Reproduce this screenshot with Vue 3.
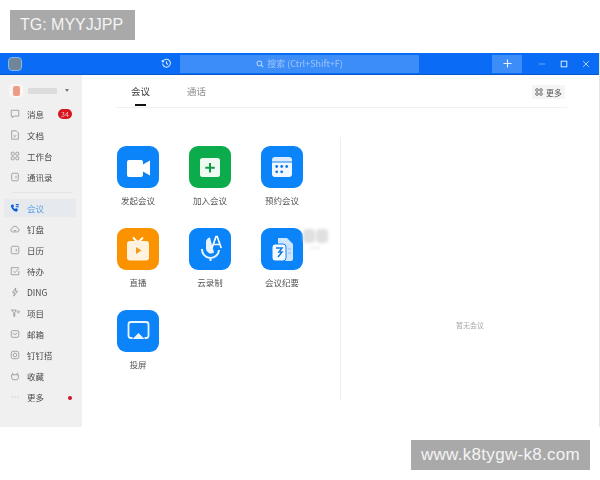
<script setup>
const navTop = [
  { label: "消息", icon: "chat", badge: "34" },
  { label: "文档", icon: "doc" },
  { label: "工作台", icon: "apps" },
  { label: "通讯录", icon: "book" },
];

const navBottom = [
  { label: "会议", icon: "phone", active: true },
  { label: "钉盘", icon: "cloud" },
  { label: "日历", icon: "cal" },
  { label: "待办", icon: "todo" },
  { label: "DING", icon: "bolt" },
  { label: "项目", icon: "proj" },
  { label: "邮箱", icon: "mail" },
  { label: "钉钉搭", icon: "ring" },
  { label: "收藏", icon: "box" },
  { label: "更多", icon: "dots", dot: true },
];

const tiles = [
  { label: "发起会议", icon: "video", color: "#0a84f8" },
  { label: "加入会议", icon: "plus", color: "#0cab4c" },
  { label: "预约会议", icon: "calendar", color: "#0a84f8" },
  { label: "直播", icon: "tv", color: "#fb9300" },
  { label: "云录制", icon: "mic", color: "#0a84f8" },
  { label: "会议纪要", icon: "notes", color: "#0a84f8" },
  { label: "投屏", icon: "cast", color: "#0a84f8" },
];
</script>

<template>
  <div class="page">
    <div class="tag tag-top">TG: MYYJJPP</div>

    <div class="window">
      <header class="titlebar">
        <div class="logo"></div>
        <svg class="history" viewBox="0 0 14 14" fill="none" stroke="#dcecff" stroke-width="1.3">
          <path d="M2.6 4.2A5 5 0 1 1 2 7" />
          <path d="M1.6 2.4v2.2h2.2" />
          <path d="M7 4.2V7l2 1.2" />
        </svg>
        <div class="search">
          <svg class="search-icon" viewBox="0 0 10 10" fill="none" stroke="#b5d4ff" stroke-width="1.3">
            <circle cx="4.2" cy="4.2" r="3" />
            <path d="M6.5 6.5 9 9" />
          </svg>
          <span>搜索 (Ctrl+Shift+F)</span>
        </div>
        <div class="add">
          <svg viewBox="0 0 10 10" stroke="#e8f2ff" stroke-width="1.2"><path d="M5 0.5v9M0.5 5h9" /></svg>
        </div>
        <div class="controls">
          <svg viewBox="0 0 10 10" stroke="#7fb4fb" stroke-width="1" fill="none"><path d="M1 5h8" /></svg>
          <svg viewBox="0 0 10 10" stroke="#d5e7ff" stroke-width="1.3" fill="none"><rect x="1.5" y="1.5" width="7" height="7" /></svg>
          <svg viewBox="0 0 10 10" stroke="#c3dcff" stroke-width="1.1" fill="none"><path d="M1.5 1.5l7 7M8.5 1.5l-7 7" /></svg>
        </div>
      </header>

      <div class="body">
        <aside class="sidebar">
          <div class="profile">
            <div class="avatar"><span></span></div>
            <div class="name"></div>
            <div class="caret"></div>
          </div>

          <div v-for="item in navTop" :key="item.label" class="nav-item">
            <svg class="nav-icon" viewBox="0 0 12 12" fill="none" stroke="#8b8b8b" stroke-width="0.9">
              <path v-if="item.icon === 'chat'" d="M1.5 1.5h9v7H4.5L2.8 10.4V8.5H1.5z" />
              <path v-if="item.icon === 'doc'" d="M2 1h5.5L10 3.5V11H2zM4 6l2 2M7.5 6 5 9" />
              <g v-if="item.icon === 'apps'">
                <rect x="1.5" y="1.5" width="3.6" height="3.6" rx="1" />
                <rect x="6.9" y="1.5" width="3.6" height="3.6" rx="1" />
                <rect x="1.5" y="6.9" width="3.6" height="3.6" rx="1" />
                <rect x="6.9" y="6.9" width="3.6" height="3.6" rx="1" />
              </g>
              <g v-if="item.icon === 'book'">
                <rect x="2" y="1.5" width="8" height="9" rx="1.5" />
                <path d="M7.2 4.5v3" />
              </g>
            </svg>
            <span class="nav-label">{{ item.label }}</span>
            <span v-if="item.badge" class="badge">{{ item.badge }}</span>
          </div>

          <div class="nav-divider"></div>

          <div
            v-for="item in navBottom"
            :key="item.label"
            class="nav-item"
            :class="{ active: item.active }"
          >
            <svg class="nav-icon" viewBox="0 0 12 12" fill="none" stroke="#8b8b8b" stroke-width="0.9">
              <g v-if="item.icon === 'phone'">
                <path
                  fill="#0a5fd8"
                  stroke="none"
                  d="M1 2.800 3.600 1.400l1.300 2.400-1.100 1c.5 1.200 1.200 1.900 2.400 2.400l1-1.100 2.400 1.300L8.300 10.600C4.600 10.400 1.400 7 1 2.800z"
                />
                <path d="M7 2h3.500M7 4.500h3.500" stroke="#0a5fd8" stroke-width="1.400" />
              </g>
              <path v-if="item.icon === 'cloud'" d="M3 9.500a2.200 2.200 0 0 1-.3-4.300 3.400 3.400 0 0 1 6.600 0A2.200 2.200 0 0 1 9 9.500zM4.500 7.800h3" />
              <g v-if="item.icon === 'cal'">
                <rect x="1.500" y="1.500" width="9" height="9" rx="1.500" />
                <path d="M7.500 4.500v3.500" />
              </g>
              <path v-if="item.icon === 'todo'" d="M10.500 2H1.500v8.500h9V6M4 6l2 2 4.500-5" />
              <path v-if="item.icon === 'bolt'" d="M7 1 3 6.500h2.500L4.500 11 9 5H6.500z" />
              <path v-if="item.icon === 'proj'" d="M1.500 2.500h6L5.800 5.500V10H4.500V5.500zM10 3.500a1.200 1.200 0 1 1-.1 0" />
              <g v-if="item.icon === 'mail'">
                <rect x="1.500" y="2" width="9" height="8" rx="1.500" />
                <path d="M3.500 5 6 6.800 8.500 5" />
              </g>
              <g v-if="item.icon === 'ring'">
                <rect x="1.500" y="1.500" width="9" height="9" rx="2.500" />
                <circle cx="6" cy="6" r="2.200" />
              </g>
              <path v-if="item.icon === 'box'" d="M2 4.500h8V8a2.500 2.500 0 0 1-2.500 2.500h-3A2.500 2.500 0 0 1 2 8zM4 4.500 3 2M8 4.500 9 2" />
              <path v-if="item.icon === 'dots'" d="M2 6h.9M5.600 6h.9M9.200 6h.9" />
            </svg>
            <span class="nav-label">{{ item.label }}</span>
            <span v-if="item.dot" class="dot"></span>
          </div>
        </aside>

        <main class="content">
          <div class="tabs">
            <div class="tab tab-active">会议</div>
            <div class="tab">通话</div>
            <div class="more-btn">
              <svg viewBox="0 0 10 10" fill="none" stroke="#555" stroke-width="1.100">
                <rect x="1" y="1" width="3" height="3" rx="0.800" />
                <rect x="6" y="1" width="3" height="3" rx="0.800" />
                <rect x="1" y="6" width="3" height="3" rx="0.800" />
                <rect x="6" y="6" width="3" height="3" rx="0.800" />
              </svg>
              <span>更多</span>
            </div>
          </div>

          <div class="panels">
            <div class="tile-grid">
              <div v-for="tile in tiles" :key="tile.label" class="tile">
                <div class="tile-box" :style="{ background: tile.color }">
                  <svg class="tile-icon" viewBox="0 0 42 42">
                    <path
                      v-if="tile.icon === 'video'"
                      fill="#fff"
                      d="M10 16a2 2 0 0 1 2-2h12a2 2 0 0 1 2 2v2.500l7-4v15l-7-4V29a2 2 0 0 1-2 2H12a2 2 0 0 1-2-2z"
                    />
                    <g v-if="tile.icon === 'plus'">
                      <rect x="11" y="12" width="20" height="19" rx="2.500" fill="#eefaf2" />
                      <path d="M21 17v9.500M16.300 21.700h9.500" stroke="#0c9a45" stroke-width="2" />
                    </g>
                    <g v-if="tile.icon === 'calendar'">
                      <path d="M11 14a3 3 0 0 1 3-3h14a3 3 0 0 1 3 3v1.500H11z" fill="#dcecff" />
                      <path d="M11 16.500h20V28a3 3 0 0 1-3 3H14a3 3 0 0 1-3-3z" fill="#f2f8ff" />
                      <g fill="#1478df">
                        <circle cx="15.700" cy="20.500" r="1.400" />
                        <circle cx="20.700" cy="20.500" r="1.400" />
                        <circle cx="25.700" cy="20.500" r="1.400" />
                        <circle cx="15.700" cy="25.800" r="1.400" />
                        <circle cx="20.700" cy="25.800" r="1.400" />
                      </g>
                    </g>
                    <g v-if="tile.icon === 'tv'">
                      <path d="M16 9.500l4 4h2l4-4" fill="none" stroke="#fff" stroke-width="1.800" />
                      <rect x="10" y="13" width="22" height="19.500" rx="3" fill="#fff3df" />
                      <path d="M19 19l5.500 3.500-5.500 3.500z" fill="#f59a18" />
                    </g>
                    <g v-if="tile.icon === 'mic'">
                      <path d="M21 9.500a5 5 0 0 0-4 5v6a5 5 0 0 0 8 4z" fill="#e8f3ff" />
                      <path d="M13 21a8.500 8.500 0 0 0 17 1M21.500 29.500V33" fill="none" stroke="#e8f3ff" stroke-width="2" />
                      <path d="M23 20l4-11.500h1.200l4 11.500M24.400 16.500h6.500" fill="none" stroke="#fff" stroke-width="1.700" />
                    </g>
                    <g v-if="tile.icon === 'notes'">
                      <path d="M17 10h9l6 6v15a2 2 0 0 1-2 2H17z" fill="#cfe5ff" />
                      <path d="M27 21h3M27 25h3" stroke="#8fbdf4" stroke-width="1" />
                      <rect x="11" y="16" width="14" height="17" rx="3" fill="#f4f9ff" stroke="#0a84f8" stroke-width="1" />
                      <path d="M15 20h6l-3 4h3l-4 5" fill="none" stroke="#1478df" stroke-width="1.500" />
                    </g>
                    <g v-if="tile.icon === 'cast'">
                      <path d="M15.500 28H14a2.500 2.500 0 0 1-2.500-2.500v-11A2.500 2.500 0 0 1 14 12h15a2.500 2.500 0 0 1 2.500 2.500v11A2.500 2.500 0 0 1 29 28h-1.500" fill="none" stroke="#eaf4ff" stroke-width="1.800" />
                      <path d="M21.500 23 27.500 29h-12z" fill="#eaf4ff" />
                    </g>
                  </svg>
                </div>
                <div class="tile-label">{{ tile.label }}</div>
              </div>
              <div class="watermark" aria-hidden="true">
                <span></span>
                <span></span>
                <i></i>
              </div>
            </div>
            <div class="empty">暂无会议</div>
          </div>
        </main>
      </div>
    </div>

    <div class="tag tag-bottom">www.k8tygw-k8.com</div>
  </div>
</template>

<style scoped>
.page {
  width: 600px;
  height: 480px;
  display: flex;
  flex-direction: column;
  background: #fff;
  font-family: "Noto Sans CJK SC", "Liberation Sans", sans-serif;
  overflow: hidden;
}

.tag {
  background: #a9a9a9;
  color: #f4f4f4;
  height: 30px;
  display: flex;
  align-items: center;
  font-family: "Liberation Sans", sans-serif;
  font-size: 16px;
}

.tag-top {
  width: 125px;
  margin: 10px 0 13px 10px;
  padding-left: 10px;
  box-sizing: border-box;
}

.tag-bottom {
  width: 179px;
  margin: 13px 10px 0 auto;
  justify-content: center;
  font-size: 17px;
  letter-spacing: 0.3px;
}

.window {
  height: 374px;
  display: flex;
  flex-direction: column;
  border-right: 1px solid #e4e4e4;
  box-sizing: border-box;
  filter: blur(0.35px);
}

.titlebar {
  height: 22px;
  flex: none;
  display: flex;
  align-items: center;
  background: #0a6cf5;
  border-bottom: 1px solid #0a58c8;
  box-sizing: border-box;
}

.logo {
  width: 14px;
  height: 14px;
  margin-left: 8px;
  border-radius: 4px;
  background: #6f8699;
  border: 1px solid #7db8f5;
  box-sizing: border-box;
}

.history {
  width: 11px;
  height: 11px;
  margin-left: 139px;
}

.search {
  width: 239px;
  height: 18px;
  margin-left: 8px;
  background: #3d8df8;
  color: #9cc5fb;
  font-size: 9px;
  display: flex;
  align-items: center;
  justify-content: center;
  gap: 3px;
}

.search-icon {
  width: 8px;
  height: 8px;
}

.add {
  width: 30px;
  height: 18px;
  margin-left: 73px;
  background: #3d8df8;
  display: flex;
  align-items: center;
  justify-content: center;
}

.add svg {
  width: 9px;
  height: 9px;
}

.controls {
  display: flex;
  gap: 14px;
  margin-left: 16px;
}

.controls svg {
  width: 8px;
  height: 8px;
}

.body {
  flex: 1;
  display: flex;
  min-height: 0;
}

.sidebar {
  width: 82px;
  flex: none;
  background: #f0f0f0;
  padding-top: 6px;
  box-sizing: border-box;
}

.profile {
  height: 19px;
  display: flex;
  align-items: center;
  padding-left: 9px;
  margin-bottom: 3px;
}

.avatar {
  width: 14px;
  height: 14px;
  border-radius: 4px;
  background: #faf6f3;
  display: flex;
  align-items: center;
  justify-content: center;
}

.avatar span {
  width: 7px;
  height: 10px;
  border-radius: 2px;
  background: #ee9c88;
}

.name {
  width: 29px;
  height: 6px;
  margin-left: 5px;
  background: #dcdcdc;
}

.caret {
  margin-left: 8px;
  border-left: 2px solid transparent;
  border-right: 2px solid transparent;
  border-top: 3px solid #777;
}

.nav-item {
  height: 21px;
  display: flex;
  align-items: center;
  margin-left: 4px;
  width: 72px;
  padding-left: 6px;
  box-sizing: border-box;
  color: #4a4a4a;
  font-size: 8.500px;
  position: relative;
}

.nav-item.active {
  background: #e6e9ed;
  height: 18px;
  margin-top: 1.500px;
  margin-bottom: 1.500px;
  color: #5a9fe6;
}

.nav-icon {
  width: 10px;
  height: 10px;
  flex: none;
}

.nav-label {
  margin-left: 7px;
}

.badge {
  position: absolute;
  left: 54px;
  top: 6px;
  width: 14px;
  height: 10px;
  border-radius: 5px;
  background: #d8141c;
  color: #f5c7c9;
  font-size: 7px;
  line-height: 10px;
  text-align: center;
}

.dot {
  position: absolute;
  left: 64px;
  top: 9px;
  width: 4px;
  height: 4px;
  border-radius: 50%;
  background: #cf1430;
}

.nav-divider {
  height: 1px;
  margin: 5px 10px 6px 12px;
  background: #e4e4e4;
}

.content {
  flex: 1;
  min-width: 0;
  display: flex;
  flex-direction: column;
  background: #fff;
}

.tabs {
  height: 32px;
  flex: none;
  margin-left: 34px;
  margin-right: 32px;
  border-bottom: 1px solid #f1f1f1;
  display: flex;
  align-items: flex-start;
  font-size: 9.500px;
  color: #8d8d8d;
}

.tab {
  margin-left: 15px;
  margin-right: 22px;
  padding-top: 9px;
  line-height: 14px;
}

.tab-active {
  color: #3a3a3a;
  position: relative;
}

.tab-active::after {
  content: "";
  position: absolute;
  left: 4px;
  right: 4px;
  bottom: -8px;
  height: 2px;
  background: #111;
}

.more-btn {
  margin: 10px 2px 0 auto;
  height: 14px;
  padding: 0 3px;
  display: flex;
  align-items: center;
  gap: 3px;
  background: #f5f5f5;
  color: #555;
  font-size: 8px;
}

.more-btn svg {
  width: 8px;
  height: 8px;
}

.panels {
  flex: 1;
  display: flex;
  min-height: 0;
}

.tile-grid {
  width: 259px;
  height: 263px;
  flex: none;
  margin-top: 29px;
  padding: 9px 0 0 35px;
  box-sizing: border-box;
  display: grid;
  grid-template-columns: repeat(3, 72px);
  grid-auto-rows: 82px;
  align-content: start;
  border-right: 1px solid #efefef;
  position: relative;
}

.tile {
  width: 42px;
  display: flex;
  flex-direction: column;
  align-items: center;
}

.tile-box {
  width: 42px;
  height: 42px;
  border-radius: 9px;
  flex: none;
}

.tile-icon {
  display: block;
  width: 42px;
  height: 42px;
}

.tile-label {
  margin-top: 6px;
  font-size: 8.500px;
  line-height: 13px;
  color: #555;
  white-space: nowrap;
}

/* faint stamp sitting over the tile grid */
.watermark {
  position: absolute;
  left: 221px;
  top: 92px;
  width: 26px;
  height: 24px;
  display: flex;
  gap: 1px;
  flex-wrap: wrap;
  align-content: flex-start;
  filter: blur(1.5px);
}

.watermark span {
  width: 12px;
  height: 14px;
  border-radius: 4px;
  background: #e0e0e0;
}

.watermark i {
  width: 10px;
  height: 2px;
  margin: 3px 0 0 7px;
  background: #ececec;
}

.empty {
  flex: 1;
  margin-top: 211px;
  text-align: center;
  font-size: 7px;
  line-height: 12px;
  color: #a8a8a8;
}
</style>

<style>
html,
body {
  margin: 0;
  background: #fff;
}
</style>
